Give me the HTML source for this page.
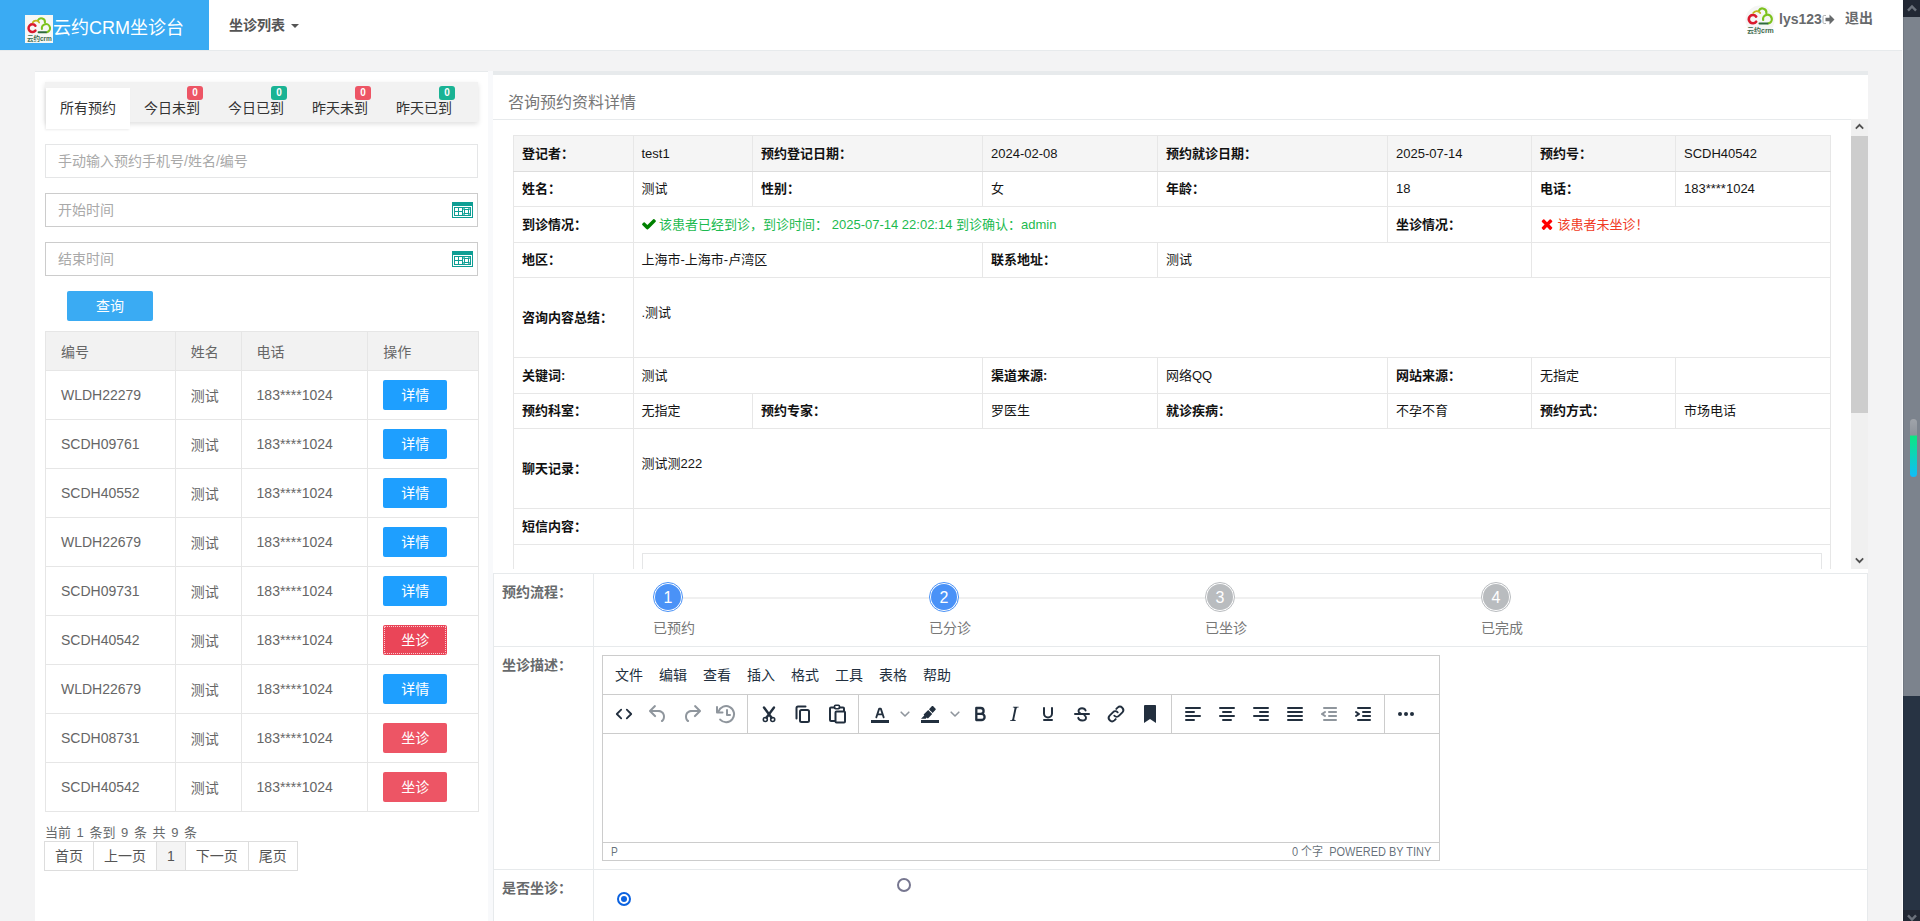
<!DOCTYPE html>
<html lang="zh-CN">
<head>
<meta charset="utf-8">
<title>云约CRM坐诊台</title>
<style>
*{box-sizing:border-box;margin:0;padding:0}
html,body{width:1920px;height:921px;overflow:hidden}
body{background:#f3f3f4;font-family:"Liberation Sans","Noto Sans CJK SC",sans-serif;font-size:13px;color:#676a6c;position:relative}
a{color:inherit;text-decoration:none}
/* ---------- top nav ---------- */
#nav{position:absolute;left:0;top:0;width:1903px;height:51px;background:#fff;border-bottom:1px solid #e7eaec}
#brand{position:absolute;left:0;top:0;width:209px;height:50px;background:#3aabf3;color:#fff;font-size:18px;line-height:50px;white-space:nowrap}
#brand svg{position:absolute;left:25px;top:15px}
#brand span{position:absolute;left:53px;top:3px}
#menu{position:absolute;left:229px;top:0;height:50px;line-height:50px;font-size:14px;font-weight:bold;color:#555}
#menu i{display:inline-block;width:0;height:0;border-left:4px solid transparent;border-right:4px solid transparent;border-top:4px solid #555;margin-left:6px;vertical-align:middle;position:relative;top:0}
#user{position:absolute;left:1745px;top:0;height:50px}
#user .ava{position:absolute;left:0;top:5px}
#user .nm{position:absolute;left:34px;top:11px;font-size:14px;font-weight:bold;color:#676a6c;line-height:16px;white-space:nowrap}
#user .out{position:absolute;left:100px;top:10px;font-size:14px;font-weight:bold;color:#676a6c;line-height:16px;white-space:nowrap}
/* ---------- page scrollbar ---------- */
#sb{position:absolute;left:1902px;top:0;width:18px;height:921px;background:#273343;border-left:1px solid #fdfdfd;overflow:hidden}
#sb:after{content:"";position:absolute;left:0;top:0;width:1px;height:921px;background:rgba(10,16,28,.1)}
#sb .up{position:absolute;left:0;top:0;width:17px;height:17px;background:#222834}
#sb .th{position:absolute;left:0;top:17px;width:17px;height:679px;background:#7c838d}
#sb .dn{position:absolute;left:0;top:910px;width:17px;height:17px;background:#222834}
#sb svg{position:absolute;left:4px;top:4px}
#sb .pill{position:absolute;left:7px;top:419px;width:7px;height:58px;border-radius:4px;background:linear-gradient(#a0a4aa 0,#8e939b 28%,#0be881 29%,#0fbcf9 100%)}
/* ---------- left panel ---------- */
#left{position:absolute;left:35px;top:71px;width:453px;height:860px;background:#fff;border-top:1px solid #e7eaec}
#tabs{position:absolute;left:10px;top:10px;width:433px;height:40px;background:#f2f2f2;box-shadow:0 2px 5px rgba(0,0,0,.13);font-size:14px;color:#333}
#tabs .t{position:absolute;top:6px;height:35px;line-height:40px;text-align:center;width:84px;white-space:nowrap}
#tabs .t.on{background:#fff;height:41px;box-shadow:-1px 1px 2px rgba(0,0,0,.08)}
#tabs b{position:absolute;top:-2px;width:16px;height:14px;border-radius:3px;color:#fff;font-size:10px;line-height:14px;text-align:center;font-weight:bold}
.red{background:#ed5565}.grn{background:#1ab394}
.inp{position:absolute;left:10px;width:433px;height:34px;border:1px solid #e5e6e7;background:#fff;font-size:14px;line-height:32px;padding-left:12px;color:#a9a9a9}
.inp.d{border-color:#ccc}
.inp svg{position:absolute;left:406px;top:8px}
#qry{position:absolute;left:32px;top:219px;width:86px;height:30px;background:#3aabf3;color:#fff;font-size:14px;line-height:30px;text-align:center;border-radius:2px}
#lt{position:absolute;left:10px;top:259px;width:434px;border-collapse:collapse;font-size:14px;color:#666}
#lt th,#lt td{border:1px solid #e6e6e6;padding:0 15px;text-align:left;font-weight:normal;white-space:nowrap}
#lt th{height:39px;background:#f2f2f2}
#lt td{height:49px}
.btn{display:block;width:64px;height:30px;line-height:30px;text-align:center;color:#fff;font-size:14px;border-radius:2px;background:#1e9fff}
.btn.r{background:#ed5565}
.btn.f{background:#ea4558;outline:1px dotted rgba(255,255,255,.72);outline-offset:-2px}
#cnt{position:absolute;left:10px;top:752px;font-size:13px;line-height:18px;color:#676a6c;word-spacing:2px;white-space:nowrap}
#pg{position:absolute;left:10px;top:769px;height:30px;display:flex;font-size:14px;color:#555}
#pg span{display:block;height:30px;line-height:28px;border:1px solid #ddd;margin-left:-1px;padding:0 10px;background:#fff}
#pg span.on{background:#f4f4f4}

/* ---------- right panel ---------- */
#right{position:absolute;left:493px;top:71px;width:1375px;height:860px;background:#fff;border-top:4px solid #e7eaec}
#gap{position:absolute;left:488px;top:71px;width:5px;height:860px;background:#f8f9fb}
#ttl{position:absolute;left:0;top:0;width:1375px;height:45px;border-bottom:1px solid #e7eaec;font-size:16px;color:#777;line-height:22px;padding:17px 0 0 15px}
#scr{position:absolute;left:0;top:44px;width:1375px;height:450px;overflow:hidden}
#isb{position:absolute;left:1358px;top:0;width:17px;height:450px;background:#f0f0f0}
#isb .th{position:absolute;left:0;top:17px;width:17px;height:277px;background:#cdcdcd}
#isb svg{position:absolute;left:4px}
#dt{position:absolute;left:20px;top:16px;width:1318px;border-collapse:collapse;table-layout:fixed;font-size:13px;color:#151515;font-family:"Liberation Sans","Noto Sans CJK SC",sans-serif}
#dt td{border:1px solid #e7e7e7;padding:0 8px;line-height:18px;white-space:nowrap;overflow:hidden}
#dt tr.h td{background:#f5f5f5;border-bottom-color:#ddd}
#dt td.l{font-weight:bold;color:#111}
.ok{color:#1cba4f}.no{color:#f03a24}
.fa{vertical-align:-3px;margin-left:-1px;margin-right:-1px}
/* bottom form */
#form{position:absolute;left:0;top:498px;width:1375px;border-collapse:collapse;font-size:14px;color:#676a6c}
.frow{position:absolute;left:0;width:1375px;border-top:1px solid #e7eaec;border-right:1px solid #e7eaec;border-left:1px solid #e7eaec}
.frow .lab{position:absolute;left:-1px;top:0;width:101px;height:100%;border-right:1px solid #e7eaec;font-weight:bold;padding:8px 0 0 9px;font-size:14px;line-height:20px;color:#676a6c}
/* steps */
.step{position:absolute;top:8px;width:30px;height:30px;border-radius:50%;border:1px solid #4a92f7;padding:1px;margin-left:-1px}
.step i{display:block;width:26px;height:26px;border-radius:50%;background:#4a92f7;color:#fff;font-style:normal;font-size:16px;line-height:28px;text-align:center}
.step.g{border-color:#b9bcbf}.step.g i{background:#b9bcbf}
.sline{position:absolute;top:23px;height:2px;background:#f0f0f0;margin-left:-1px}
.stxt{position:absolute;top:45px;font-size:14px;line-height:18px;color:#777;margin-left:-1px}
/* editor */
#ed{position:absolute;left:108px;top:8px;width:838px;height:206px;border:1px solid #ccc;background:#fff}
#mb{position:absolute;left:0;top:0;width:836px;height:38px;font-size:14px;color:#222f3e;line-height:39px;white-space:nowrap}
#mb span{position:absolute;top:0}
#tb{position:absolute;left:0;top:38px;width:836px;height:40px;border-top:1px solid #ccc;border-bottom:1px solid #ccc}
#tb svg{position:absolute;fill:#222f3e}
#tb .sep{position:absolute;top:0;width:1px;height:38px;background:#ccc}
#st{position:absolute;left:0;top:186px;width:836px;height:18px;border-top:1px solid #ccc;font-size:12px;color:rgba(34,47,62,.7);line-height:18px;text-transform:uppercase}
</style>
</head>
<body>
<div id="nav">
  <div id="brand">
    <svg width="28" height="28" viewBox="0 0 28 28"><rect width="28" height="28" fill="#f6f7f5"/><path d="M10.4 10.8A3.85 3.85 0 1 0 10.4 15.6" fill="none" stroke="#da1a2e" stroke-width="2.5" stroke-linecap="round"/><path d="M12.9 5.4A3.7 3.7 0 0 1 19.9 7.6" fill="none" stroke="#7dc21e" stroke-width="2" stroke-linecap="round"/><path d="M7.7 7.5C9 5.3 12.6 4.9 14.2 7.5" fill="none" stroke="#c4b61f" stroke-width="1.7" stroke-linecap="round"/><path d="M16.9 13.9A4.1 4.1 0 1 1 21.8 17.2" fill="none" stroke="#7dc21e" stroke-width="2.1" stroke-linecap="round"/><rect x="12.6" y="16.3" width="9.3" height="1.9" rx=".95" fill="#2f6b3c"/><text x="1.9" y="26" font-size="6.4" font-weight="bold" textLength="25" lengthAdjust="spacingAndGlyphs" fill="#3d6a4d" font-family="Liberation Sans,Noto Sans CJK SC,sans-serif">云约crm</text></svg>
    <span>云约CRM坐诊台</span>
  </div>
  <div id="menu">坐诊列表<i></i></div>
  <div id="user">
    <svg class="ava" width="30" height="30" viewBox="0 0 28 28"><circle cx="14" cy="14" r="13.6" fill="#f5f6f5"/><path d="M10.4 10.8A3.85 3.85 0 1 0 10.4 15.6" fill="none" stroke="#da1a2e" stroke-width="2.5" stroke-linecap="round"/><path d="M12.9 5.4A3.7 3.7 0 0 1 19.9 7.6" fill="none" stroke="#7dc21e" stroke-width="2" stroke-linecap="round"/><path d="M7.7 7.5C9 5.3 12.6 4.9 14.2 7.5" fill="none" stroke="#c4b61f" stroke-width="1.7" stroke-linecap="round"/><path d="M16.9 13.9A4.1 4.1 0 1 1 21.8 17.2" fill="none" stroke="#7dc21e" stroke-width="2.1" stroke-linecap="round"/><rect x="12.6" y="16.3" width="9.3" height="1.9" rx=".95" fill="#2f6b3c"/><text x="1.9" y="26" font-size="6.4" font-weight="bold" textLength="25" lengthAdjust="spacingAndGlyphs" fill="#3d6a4d" font-family="Liberation Sans,Noto Sans CJK SC,sans-serif">云约crm</text></svg>
    <span class="nm">lys123</span>
    <svg style="position:absolute;left:77px;top:14px" width="13" height="11" viewBox="0 0 13 11"><path d="M4 1.5H2.2A1.2 1.2 0 0 0 1 2.7v5.6a1.2 1.2 0 0 0 1.2 1.2H4" fill="none" stroke="#a3a5a6" stroke-width=".9"/><path d="M3.5 3.7h4V.5l5 5-5 5V7.3h-4z" fill="#676a6c"/></svg>
    <span class="out">退出</span>
  </div>
</div>
<div id="sb"><div class="up"><svg width="10" height="8" viewBox="0 0 10 8"><path d="M1 6.6 5 2.4l4 4.2" fill="none" stroke="#6c727c" stroke-width="2.4"/></svg></div><div class="th"></div><div class="dn"><svg width="10" height="8" viewBox="0 0 10 8"><path d="M1 1.4 5 5.6l4-4.2" fill="none" stroke="#6c727c" stroke-width="2.4"/></svg></div><div class="pill"></div></div>

<div id="left">
  <div id="tabs">
    <div class="t on" style="left:1px">所有预约</div>
    <div class="t" style="left:85px">今日未到<b class="red" style="left:57px">0</b></div>
    <div class="t" style="left:169px">今日已到<b class="grn" style="left:57px">0</b></div>
    <div class="t" style="left:253px">昨天未到<b class="red" style="left:57px">0</b></div>
    <div class="t" style="left:337px">昨天已到<b class="grn" style="left:57px">0</b></div>
  </div>
  <div class="inp" style="top:72px">手动输入预约手机号/姓名/编号</div>
  <div class="inp d" style="top:121px">开始时间<svg width="21" height="16" viewBox="0 0 21 16"><rect width="21" height="16" fill="#0e9e94"/><rect x="1" y="4" width="19" height="11" fill="#fff"/><rect x="2" y="5" width="17" height="9" fill="#0e9e94"/><rect x="3" y="6" width="3" height="3" fill="#fff"/><rect x="7" y="6" width="3" height="3" fill="#fff"/><rect x="3" y="10" width="3" height="3" fill="#fff"/><rect x="7" y="10" width="3" height="3" fill="#fff"/><rect x="11" y="6" width="7" height="7" fill="#fff"/><rect x="12.5" y="7.5" width="4" height="4" fill="none" stroke="#0e9e94" stroke-width="1"/><path d="M11.5 8V6.5H13M16 6.5h1.5V8M17.5 11v1.5H16M13 12.5h-1.5V11" fill="none" stroke="#0e9e94" stroke-width=".7"/></svg></div>
  <div class="inp d" style="top:170px">结束时间<svg width="21" height="16" viewBox="0 0 21 16"><rect width="21" height="16" fill="#0e9e94"/><rect x="1" y="4" width="19" height="11" fill="#fff"/><rect x="2" y="5" width="17" height="9" fill="#0e9e94"/><rect x="3" y="6" width="3" height="3" fill="#fff"/><rect x="7" y="6" width="3" height="3" fill="#fff"/><rect x="3" y="10" width="3" height="3" fill="#fff"/><rect x="7" y="10" width="3" height="3" fill="#fff"/><rect x="11" y="6" width="7" height="7" fill="#fff"/><rect x="12.5" y="7.5" width="4" height="4" fill="none" stroke="#0e9e94" stroke-width="1"/><path d="M11.5 8V6.5H13M16 6.5h1.5V8M17.5 11v1.5H16M13 12.5h-1.5V11" fill="none" stroke="#0e9e94" stroke-width=".7"/></svg></div>
  <div id="qry">查询</div>
  <table id="lt">
    <colgroup><col style="width:130px"><col style="width:66px"><col style="width:127px"><col style="width:111px"></colgroup>
    <tr><th>编号</th><th>姓名</th><th>电话</th><th>操作</th></tr>
    <tr><td>WLDH22279</td><td>测试</td><td>183****1024</td><td><a class="btn">详情</a></td></tr>
    <tr><td>SCDH09761</td><td>测试</td><td>183****1024</td><td><a class="btn">详情</a></td></tr>
    <tr><td>SCDH40552</td><td>测试</td><td>183****1024</td><td><a class="btn">详情</a></td></tr>
    <tr><td>WLDH22679</td><td>测试</td><td>183****1024</td><td><a class="btn">详情</a></td></tr>
    <tr><td>SCDH09731</td><td>测试</td><td>183****1024</td><td><a class="btn">详情</a></td></tr>
    <tr><td>SCDH40542</td><td>测试</td><td>183****1024</td><td><a class="btn r f">坐诊</a></td></tr>
    <tr><td>WLDH22679</td><td>测试</td><td>183****1024</td><td><a class="btn">详情</a></td></tr>
    <tr><td>SCDH08731</td><td>测试</td><td>183****1024</td><td><a class="btn r">坐诊</a></td></tr>
    <tr><td>SCDH40542</td><td>测试</td><td>183****1024</td><td><a class="btn r">坐诊</a></td></tr>
  </table>
  <div id="cnt">当前 1 条到 9 条 共 9 条</div>
  <div id="pg"><span>首页</span><span>上一页</span><span class="on">1</span><span>下一页</span><span>尾页</span></div>
</div>
<div id="gap"></div>
<div id="right">
  <div id="ttl">咨询预约资料详情</div>
  <div id="scr">
    <table id="dt">
      <colgroup><col style="width:119.5px"><col style="width:119.5px"><col style="width:230px"><col style="width:175px"><col style="width:230px"><col style="width:144px"><col style="width:144px"><col style="width:155px"></colgroup>
      <tr style="height:36px" class="h"><td class="l">登记者：</td><td>test1</td><td class="l">预约登记日期：</td><td>2024-02-08</td><td class="l">预约就诊日期：</td><td>2025-07-14</td><td class="l">预约号：</td><td>SCDH40542</td></tr>
      <tr style="height:35px"><td class="l">姓名：</td><td>测试</td><td class="l">性别：</td><td>女</td><td class="l">年龄：</td><td>18</td><td class="l">电话：</td><td>183****1024</td></tr>
      <tr style="height:36px"><td class="l">到诊情况：</td><td colspan="4" class="ok"><svg class="fa" width="16" height="16" viewBox="0 0 1792 1792"><path fill="#008000" d="M1671 566q0 40-28 68l-724 724-136 136q-28 28-68 28t-68-28l-136-136-362-362q-28-28-28-68t28-68l136-136q28-28 68-28t68 28l294 295 656-657q28-28 68-28t68 28l136 136q28 28 28 68z"/></svg> 该患者已经到诊，到诊时间： 2025-07-14 22:02:14 到诊确认：admin</td><td class="l">坐诊情况：</td><td colspan="2" class="no"><svg class="fa" width="16" height="16" viewBox="0 0 1792 1792"><path fill="#ff0000" d="M1490 1322q0 40-28 68l-136 136q-28 28-68 28t-68-28l-294-294-294 294q-28 28-68 28t-68-28l-136-136q-28-28-28-68t28-68l294-294-294-294q-28-28-28-68t28-68l136-136q28-28 68-28t68 28l294 294 294-294q28-28 68-28t68 28l136 136q28 28 28 68t-28 68l-294 294 294 294q28 28 28 68z"/></svg> 该患者未坐诊！</td></tr>
      <tr style="height:35px"><td class="l">地区：</td><td colspan="2">上海市-上海市-卢湾区</td><td class="l">联系地址：</td><td colspan="2">测试</td><td colspan="2"></td></tr>
      <tr style="height:80px"><td class="l">咨询内容总结：</td><td colspan="7" style="vertical-align:top;padding-top:26px">.测试</td></tr>
      <tr style="height:36px"><td class="l">关键词:</td><td colspan="2">测试</td><td class="l">渠道来源:</td><td>网络QQ</td><td class="l">网站来源：</td><td>无指定</td><td></td></tr>
      <tr style="height:35px"><td class="l">预约科室：</td><td>无指定</td><td class="l">预约专家：</td><td>罗医生</td><td class="l">就诊疾病：</td><td>不孕不育</td><td class="l">预约方式：</td><td>市场电话</td></tr>
      <tr style="height:80px"><td class="l">聊天记录：</td><td colspan="7" style="vertical-align:top;padding-top:26px">测试测222</td></tr>
      <tr style="height:36px"><td class="l">短信内容：</td><td colspan="7"></td></tr>
      <tr style="height:60px"><td class="l"></td><td colspan="7" style="vertical-align:top;padding-top:8px"><div style="height:40px;border:1px solid #e5e6e7"></div></td></tr>
    </table>
    <div id="isb"><div class="th"></div>
      <svg style="top:4px" width="9" height="7" viewBox="0 0 9 7"><path d="M.2 5 4.5 .6 8.8 5 7.6 6.3 4.5 3.2 1.4 6.3z" fill="#505050"/></svg>
      <svg style="top:438px" width="9" height="7" viewBox="0 0 9 7"><path d="M.2 2 4.5 6.4 8.8 2 7.6 .7 4.5 3.8 1.4 .7z" fill="#505050"/></svg>
    </div>
  </div>
  <div class="frow" style="top:498px;height:73px"><div class="lab">预约流程：</div>
    <div class="sline" style="left:190px;width:246px"></div><div class="sline" style="left:466px;width:246px"></div><div class="sline" style="left:742px;width:246px"></div>
    <div class="step" style="left:160px"><i>1</i></div><div class="stxt" style="left:160px">已预约</div>
    <div class="step" style="left:436px"><i>2</i></div><div class="stxt" style="left:436px">已分诊</div>
    <div class="step g" style="left:712px"><i>3</i></div><div class="stxt" style="left:712px">已坐诊</div>
    <div class="step g" style="left:988px"><i>4</i></div><div class="stxt" style="left:988px">已完成</div>
  </div>
  <div class="frow" style="top:571px;height:223px"><div class="lab">坐诊描述：</div>
    <div id="ed">
      <div id="mb"><span style="left:12px">文件</span><span style="left:56px">编辑</span><span style="left:100px">查看</span><span style="left:144px">插入</span><span style="left:188px">格式</span><span style="left:232px">工具</span><span style="left:276px">表格</span><span style="left:320px">帮助</span></div>
      <div id="tb">
        <svg style="left:9px;top:7px" width="24" height="24" viewBox="0 0 24 24"><path d="M9.2 7.6 4.8 12l4.4 4.4M14.8 7.6l4.4 4.4-4.4 4.4" fill="none" stroke="#222f3e" stroke-linecap="round" stroke-linejoin="round" stroke-width="1.8"/></svg>
        <svg style="left:43px;top:7px" width="24" height="24" viewBox="0 0 24 24" opacity=".5"><path d="M6.4 8H12c3.7 0 6.2 2 6.8 5.1.6 2.7-.4 5.6-2.3 6.8a1 1 0 0 1-1-1.8c1.1-.6 1.8-2.7 1.4-4.6-.5-2.1-2.1-3.5-4.9-3.5H6.4l3.3 3.3a1 1 0 1 1-1.4 1.4l-5-5a1 1 0 0 1 0-1.4l5-5a1 1 0 0 1 1.4 1.4L6.4 8z"/></svg>
        <svg style="left:77px;top:7px" width="24" height="24" viewBox="0 0 24 24" opacity=".5"><g transform="matrix(-1 0 0 1 24 0)"><path d="M6.4 8H12c3.7 0 6.2 2 6.8 5.1.6 2.7-.4 5.6-2.3 6.8a1 1 0 0 1-1-1.8c1.1-.6 1.8-2.7 1.4-4.6-.5-2.1-2.1-3.5-4.9-3.5H6.4l3.3 3.3a1 1 0 1 1-1.4 1.4l-5-5a1 1 0 0 1 0-1.4l5-5a1 1 0 0 1 1.4 1.4L6.4 8z"/></g></svg>
        <svg style="left:111px;top:7px" width="24" height="24" viewBox="0 0 24 24" opacity=".5"><path d="M4.5 9.5A8 8 0 1 1 6.2 17.6" fill="none" stroke="#222f3e" stroke-linecap="round" stroke-linejoin="round" stroke-width="2"/><path d="M3 5v5.5h5.5" fill="none" stroke="#222f3e" stroke-linecap="round" stroke-linejoin="round" stroke-width="2"/><path d="M13 8v5h3" fill="none" stroke="#222f3e" stroke-linecap="round" stroke-linejoin="round" stroke-width="2"/></svg>
        <div class="sep" style="left:144px"></div>
        <svg style="left:154px;top:7px" width="24" height="24" viewBox="0 0 24 24"><path d="M7 5.5l7.6 10.3M17 5.5 9.4 15.8" fill="none" stroke="#222f3e" stroke-linecap="round" stroke-linejoin="round" stroke-width="2.4"/><circle cx="8.3" cy="17.5" r="2" fill="none" stroke="#222f3e" stroke-linecap="round" stroke-linejoin="round" stroke-width="1.6"/><circle cx="15.7" cy="17.5" r="2" fill="none" stroke="#222f3e" stroke-linecap="round" stroke-linejoin="round" stroke-width="1.6"/></svg>
        <svg style="left:188px;top:7px" width="24" height="24" viewBox="0 0 24 24"><rect x="9" y="8" width="9" height="12" rx="1.5" fill="none" stroke="#222f3e" stroke-linecap="round" stroke-linejoin="round" stroke-width="2"/><path d="M14.5 4.5H7a1.5 1.5 0 0 0-1.5 1.5V16.5" fill="none" stroke="#222f3e" stroke-linecap="round" stroke-linejoin="round" stroke-width="2"/></svg>
        <svg style="left:222px;top:7px" width="24" height="24" viewBox="0 0 24 24"><path d="M9.5 5.5H6a1 1 0 0 0-1 1V18a1 1 0 0 0 1 1h4M14.5 5.5H18a1 1 0 0 1 1 1V9" fill="none" stroke="#222f3e" stroke-linecap="round" stroke-linejoin="round" stroke-width="2"/><rect x="9.5" y="3.2" width="5" height="3.6" rx="1" fill="none" stroke="#222f3e" stroke-linecap="round" stroke-linejoin="round" stroke-width="1.6"/><rect x="10.5" y="9.5" width="9.5" height="11" rx="1" fill="none" stroke="#222f3e" stroke-linecap="round" stroke-linejoin="round" stroke-width="2"/></svg>
        <div class="sep" style="left:255px"></div>
        <svg style="left:265px;top:7px" width="24" height="24" viewBox="0 0 24 24"><path d="M3 18h18v3H3z"/><path d="M8.3 15.4 11.2 6.6h1.6l2.9 8.8M9.7 12.3h4.6" fill="none" stroke="#222f3e" stroke-linecap="round" stroke-linejoin="round" stroke-width="1.8"/></svg>
        <svg style="left:297px;top:14px" width="10" height="10" viewBox="0 0 10 10" opacity=".5"><path d="M1.2 3.2 5 7l3.8-3.8" fill="none" stroke="#222f3e" stroke-linecap="round" stroke-linejoin="round" stroke-width="1.6"/></svg>
        <svg style="left:315px;top:7px" width="24" height="24" viewBox="0 0 24 24"><path d="M3 18h18v3H3z"/><path d="M7.7 16.7H3l3.3-3.3-.7-.8L10.2 8l4 4.1-4 4.2c-.2.2-.6.2-.8 0l-.6-.7-1.1 1.1zm5-7.5L11 7.3l3-3.2c.3-.3.8-.3 1 0l2.6 2.6c.3.3.3.8 0 1l-3 3.3-1.9-1.9z"/></svg>
        <svg style="left:347px;top:14px" width="10" height="10" viewBox="0 0 10 10" opacity=".5"><path d="M1.2 3.2 5 7l3.8-3.8" fill="none" stroke="#222f3e" stroke-linecap="round" stroke-linejoin="round" stroke-width="1.6"/></svg>
        <svg style="left:365px;top:7px" width="24" height="24" viewBox="0 0 24 24"><path d="M8.3 6h4.4a2.9 2.9 0 0 1 0 5.8H8.3zM8.3 11.8h5.2a3.1 3.1 0 0 1 0 6.2H8.3z" fill="none" stroke="#222f3e" stroke-linecap="round" stroke-linejoin="round" stroke-width="2.3"/></svg>
        <svg style="left:399px;top:7px" width="24" height="24" viewBox="0 0 24 24"><path d="M16.7 4.7l-.1.9h-.3c-.6 0-1 0-1.4.3-.3.3-.4.6-.5 1.1l-2.1 9.8v.6c0 .5.4.8 1.4.8h.2l-.2.8H8l.2-.8h.2c1.1 0 1.8-.5 2-1.5l2-9.8.1-.5c0-.6-.4-.8-1.4-.8h-.3l.2-.9h5.8z"/></svg>
        <svg style="left:433px;top:7px" width="24" height="24" viewBox="0 0 24 24"><path d="M8 6v5.5a4 4 0 0 0 8 0V6M8 18h8" fill="none" stroke="#222f3e" stroke-linecap="round" stroke-linejoin="round" stroke-width="2"/></svg>
        <svg style="left:467px;top:7px" width="24" height="24" viewBox="0 0 24 24"><path d="M15.6 8.6c-.4-1.5-1.7-2.4-3.6-2.4-2.1 0-3.5 1.1-3.5 2.7 0 1 .5 1.7 1.5 2.2M14.5 13.5c1 .5 1.5 1.2 1.5 2.2 0 1.7-1.5 2.8-3.8 2.8-2.1 0-3.6-1-4-2.7" fill="none" stroke="#222f3e" stroke-linecap="round" stroke-linejoin="round" stroke-width="1.9"/><path d="M5 12h14" fill="none" stroke="#222f3e" stroke-linecap="round" stroke-linejoin="round" stroke-width="2"/></svg>
        <svg style="left:501px;top:7px" width="24" height="24" viewBox="0 0 24 24"><path d="M10.3 13.7a3.4 3.4 0 0 0 4.8 0l3.3-3.3a3.4 3.4 0 0 0-4.8-4.8l-1.3 1.3M13.7 10.3a3.4 3.4 0 0 0-4.8 0l-3.3 3.3a3.4 3.4 0 0 0 4.8 4.8l1.3-1.3" fill="none" stroke="#222f3e" stroke-linecap="round" stroke-linejoin="round" stroke-width="1.9"/></svg>
        <svg style="left:535px;top:7px" width="24" height="24" viewBox="0 0 24 24"><path d="M6 4v17l6-4 6 4V4c0-.6-.4-1-1-1H7a1 1 0 0 0-1 1z"/></svg>
        <div class="sep" style="left:568px"></div>
        <svg style="left:578px;top:7px" width="24" height="24" viewBox="0 0 24 24"><path d="M5 6h14 M5 10h8 M5 14h14 M5 18h8" fill="none" stroke="#222f3e" stroke-linecap="round" stroke-linejoin="round" stroke-width="2"/></svg>
        <svg style="left:612px;top:7px" width="24" height="24" viewBox="0 0 24 24"><path d="M5 6h14 M8 10h8 M5 14h14 M8 18h8" fill="none" stroke="#222f3e" stroke-linecap="round" stroke-linejoin="round" stroke-width="2"/></svg>
        <svg style="left:646px;top:7px" width="24" height="24" viewBox="0 0 24 24"><path d="M5 6h14 M11 10h8 M5 14h14 M11 18h8" fill="none" stroke="#222f3e" stroke-linecap="round" stroke-linejoin="round" stroke-width="2"/></svg>
        <svg style="left:680px;top:7px" width="24" height="24" viewBox="0 0 24 24"><path d="M5 6h14 M5 10h14 M5 14h14 M5 18h14" fill="none" stroke="#222f3e" stroke-linecap="round" stroke-linejoin="round" stroke-width="2"/></svg>
        <svg style="left:714px;top:7px" width="24" height="24" viewBox="0 0 24 24" opacity=".5"><path d="M7 5h12c.6 0 1 .4 1 1s-.4 1-1 1H7a1 1 0 1 1 0-2zm5 4h7c.6 0 1 .4 1 1s-.4 1-1 1h-7a1 1 0 0 1 0-2zm0 4h7c.6 0 1 .4 1 1s-.4 1-1 1h-7a1 1 0 0 1 0-2zm-5 4h12a1 1 0 0 1 0 2H7a1 1 0 0 1 0-2zm1.6-3.8a1 1 0 0 1-1.2 1.6l-3-2a1 1 0 0 1 0-1.6l3-2a1 1 0 0 1 1.2 1.6L6.8 12l1.8 1.2z"/></svg>
        <svg style="left:748px;top:7px" width="24" height="24" viewBox="0 0 24 24"><path d="M7 5h12c.6 0 1 .4 1 1s-.4 1-1 1H7a1 1 0 1 1 0-2zm5 4h7c.6 0 1 .4 1 1s-.4 1-1 1h-7a1 1 0 0 1 0-2zm0 4h7c.6 0 1 .4 1 1s-.4 1-1 1h-7a1 1 0 0 1 0-2zm-5 4h12a1 1 0 0 1 0 2H7a1 1 0 0 1 0-2zm-2.6-3.8L6.2 12l-1.8-1.2a1 1 0 0 1 1.2-1.6l3 2a1 1 0 0 1 0 1.6l-3 2a1 1 0 1 1-1.2-1.6z"/></svg>
        <div class="sep" style="left:781px"></div>
        <svg style="left:791px;top:7px" width="24" height="24" viewBox="0 0 24 24"><circle cx="6" cy="12" r="2"/><circle cx="12" cy="12" r="2"/><circle cx="18" cy="12" r="2"/></svg>
      </div>
      <div id="st"><span style="position:absolute;left:8px;transform:scaleX(.85);transform-origin:left">p</span><span style="position:absolute;right:8px;transform:scaleX(.915);transform-origin:right;white-space:nowrap">0 个字&nbsp; Powered by Tiny</span></div>
    </div>
  </div>
  <div class="frow" style="top:794px;height:80px"><div class="lab">是否坐诊：</div>
    <div style="position:absolute;left:123px;top:22px;width:14px;height:14px;border-radius:50%;border:2px solid #0b62e0;background:#fff"><div style="position:absolute;left:2px;top:2px;width:6px;height:6px;border-radius:50%;background:#0b62e0"></div></div>
    <div style="position:absolute;left:403px;top:8px;width:14px;height:14px;border-radius:50%;border:2px solid #777790;background:#fff"></div>
  </div>
</div>

</body>
</html>
